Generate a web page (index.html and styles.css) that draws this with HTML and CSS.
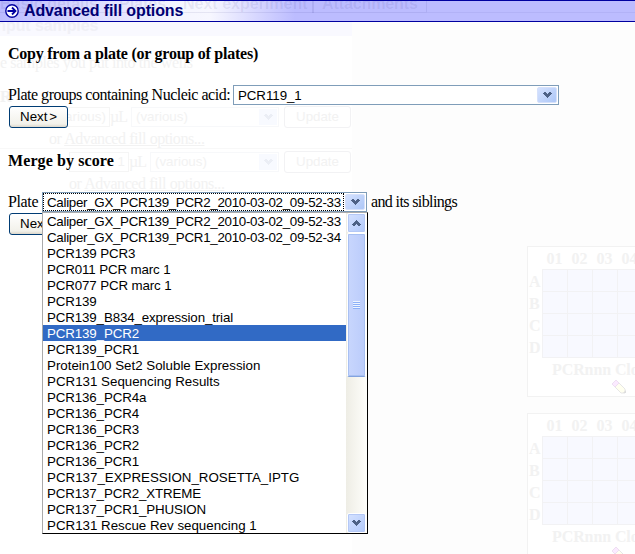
FILE: index.html
```html
<!DOCTYPE html>
<html lang="en">
<head>
<meta charset="utf-8">
<title>Advanced fill options</title>
<link rel="stylesheet" href="styles.css">
</head>
<body>
<svg class="defs" width="0" height="0">
  <symbol id="chev" viewBox="0 0 9 6" shape-rendering="crispEdges"><path fill="#4d6185" d="M1 0h2v1H1zM6 0h2v1H6zM0 1h4v1H0zM5 1h4v1H5zM1 2h7v1H1zM2 3h5v1H2zM3 4h3v1H3zM4 5h1v1H4z"/></symbol>
  <symbol id="pencil" viewBox="0 0 16 16"><path fill="#fffff0" stroke="#e6e6e6" d="M1 5L5 1l9 9v4h-4z"/><path fill="#fbeaff" stroke="#eedff2" d="M1 5L5 1l3 3-4 4z"/><path fill="#ddd" d="M12 14h3v-3z"/></symbol>
</svg>
<div class="page">
  <div class="left">
    <div class="band"><span>Input samples</span></div>
    <p class="wells">e samples you put into the wells</p>
    <div class="acid">R</div>
    <div class="fields first"><span class="box">(various)</span><span class="unit">µL</span><span class="drop">(various)<i><svg width="9" height="6"><use href="#chev"/></svg></i></span><span class="update">Update</span></div>
    <p class="or">or <u>Advanced fill options...</u></p>
    <div class="fields second"><span class="box">1</span><span class="unit">µL</span><span class="drop">(various)<i><svg width="9" height="6"><use href="#chev"/></svg></i></span><span class="update">Update</span></div>
    <p class="or more">or <u>Advanced fill options...</u></p>
  </div>
  <div class="plates">
    <div class="plate">
      <div class="cols"><b>01</b><b>02</b><b>03</b><b>04</b></div>
      <div class="body"><div class="letters"><b>A</b><b>B</b><b>C</b><b>D</b></div><div class="wellgrid"></div></div>
      <div class="name">PCRnnn Clo</div>
      <svg class="pen" width="16" height="16"><use href="#pencil"/></svg>
    </div>
    <div class="plate">
      <div class="cols"><b>01</b><b>02</b><b>03</b><b>04</b></div>
      <div class="body"><div class="letters"><b>A</b><b>B</b><b>C</b><b>D</b></div><div class="wellgrid"></div></div>
      <div class="name">PCRnnn Clo</div>
      <svg class="pen" width="16" height="16"><use href="#pencil"/></svg>
    </div>
  </div>
</div>
<div class="dialog">
  <div class="title">
    <div class="tabs"><span class="t1">Basic details</span><span class="t2">Plates</span><span class="t3">Next experiment</span><span class="t4">Attachments</span></div>
    <svg class="go" width="14" height="14" viewBox="0 0 14 14"><circle cx="7" cy="7" r="6.2" fill="#fff" stroke="#0000a0" stroke-width="1.4"/><path d="M2.5 7h8M7 3.5L10.5 7 7 10.5" fill="none" stroke="#0000a0" stroke-width="1.8"/></svg>
    <h1>Advanced fill options</h1>
  </div>
  <h2 class="copy">Copy from a plate (or group of plates)</h2>
  <div class="row"><span class="l1">Plate groups containing Nucleic acid:</span><div class="select wide"><span>PCR119_1</span><i><svg width="9" height="6"><use href="#chev"/></svg></i></div></div>
  <button class="next">Next &gt;</button>
  <h2 class="merge">Merge by score</h2>
  <div class="row"><span class="l2">Plate</span>
    <div class="select open"><span>Caliper_GX_PCR139_PCR2_2010-03-02_09-52-33</span><i><svg width="9" height="6"><use href="#chev"/></svg></i>
      <div class="menu">
        <ul>
          <li class="long">Caliper_GX_PCR139_PCR2_2010-03-02_09-52-33</li>
          <li class="long">Caliper_GX_PCR139_PCR1_2010-03-02_09-52-34</li>
          <li>PCR139 PCR3</li>
          <li>PCR011 PCR marc 1</li>
          <li>PCR077 PCR marc 1</li>
          <li>PCR139</li>
          <li>PCR139_B834_expression_trial</li>
          <li class="on">PCR139_PCR2</li>
          <li>PCR139_PCR1</li>
          <li class="caps">Protein100 Set2 Soluble Expression</li>
          <li class="caps">PCR131 Sequencing Results</li>
          <li>PCR136_PCR4a</li>
          <li>PCR136_PCR4</li>
          <li>PCR136_PCR3</li>
          <li>PCR136_PCR2</li>
          <li>PCR136_PCR1</li>
          <li class="caps">PCR137_EXPRESSION_ROSETTA_IPTG</li>
          <li>PCR137_PCR2_XTREME</li>
          <li>PCR137_PCR1_PHUSION</li>
          <li class="caps">PCR131 Rescue Rev sequencing 1</li>
        </ul>
        <div class="scroll">
          <div class="sb up"><svg width="9" height="6"><use href="#chev"/></svg></div>
          <div class="thumb"><div class="grip"></div></div>
          <div class="sb down"><svg width="9" height="6"><use href="#chev"/></svg></div>
        </div>
      </div>
    </div><span class="l3">and its siblings</span></div>
  <button class="next">Next &gt;</button>
</div>
</body>
</html>
```
FILE: styles.css
```css
* { box-sizing: border-box; }
body { margin: 0; width: 635px; height: 554px; overflow: hidden; position: relative; background: #fdfdfd; font: 16px/20px "Liberation Serif", serif; color: #000; }
h1, h2, p, ul { margin: 0; padding: 0; }
.defs { position: absolute; }
svg { display: block; flex: none; }

/* page under the dialog */
.page { position: absolute; inset: 0; overflow: hidden; display: flex; justify-content: space-between; color: #f2f2f2; }
.left { width: 352px; background: #fff; padding-top: 22px; overflow: hidden; white-space: nowrap; }
.band { height: 14px; background: #f9f9ff; color: #f0f0f6; font: bold 16px/8px "Liberation Sans", sans-serif; letter-spacing: -.1px; }
.band span { display: block; margin-left: -8px; }
.wells { margin-top: 17px; height: 20px; letter-spacing: -.4px; }
.acid { margin-top: 14px; height: 20px; font-weight: bold; }
.fields { display: flex; height: 20px; font: 13.33px/18px "Liberation Sans", sans-serif; }
.first { padding-left: 50px; }
.second { padding-left: 69px; border-top: 1px solid #f8f8f8; height: 24px; padding-top: 3px; }
.box { flex: none; width: 60px; height: 20px; border: 1px solid #f5f5f5; padding-left: 3px; }
.second .box { text-align: right; padding-right: 3px; }
.unit { flex: none; width: 21px; letter-spacing: -1px; font: 16px/20px "Liberation Serif", serif; }
.drop { flex: 1; height: 20px; border: 1px solid #f7f8fa; display: flex; justify-content: space-between; padding-left: 4px; }
.drop i { width: 18px; height: 16px; margin: 1px; background: #f8faff; display: flex; align-items: center; justify-content: center; }
.drop svg { opacity: .07; }
.update { width: 67px; height: 22px; margin: -1px 1px 0 5px; border: 1px solid #f2f2f4; border-radius: 3px; text-align: center; line-height: 20px; }
.or { margin: 2px 0 -1px 49px; letter-spacing: -.43px; }
.or.more { margin: 2px 0 0 69px; }
.plates { width: 108px; padding-top: 246px; }
.plate { height: 151px; width: 150px; margin-bottom: 16px; border: 1px solid #f2f2f2; background: #fff; font-weight: bold; }
.cols { display: flex; padding-left: 14px; height: 22px; line-height: 24px; }
.cols b { width: 25px; text-align: center; }
.body { display: flex; }
.letters { width: 14px; padding-left: 1px; }
.letters b { display: block; height: 22px; line-height: 26px; }
.wellgrid { width: 136px; height: 89px; background: repeating-linear-gradient(90deg, #f2f2f4 0 1px, transparent 1px 25px), repeating-linear-gradient(#f2f2f4 0 1px, #f8f9ff 1px 22px); }
.name { margin-left: 24px; line-height: 24px; height: 21px; white-space: nowrap; letter-spacing: -.1px; }
.pen { margin-left: 83px; }

/* dialog */
.dialog { position: absolute; inset: 0; }
.title { position: relative; height: 22px; border: solid #0000a0; border-width: 1px 0; background: linear-gradient(90deg, #b9b9ff 0, #dcdcff 90px, #f5f5ff 175px, #f7f7ff 210px, #bcbcff 295px); display: flex; align-items: center; padding-left: 5px; overflow: hidden; }
.tabs { position: absolute; left: 0; top: 0; width: 427px; height: 12px; border: solid rgba(0,0,90,.07); border-width: 0 1px 1px 0; display: flex; font: bold 16px/6px "Liberation Sans", sans-serif; color: rgba(0,0,90,.08); white-space: nowrap; }
.tabs::after { content: ""; position: absolute; left: 427px; top: 11px; width: 208px; height: 1px; background: rgba(0,0,90,.05); }
.t1 { width: 119px; }
.t2 { width: 64px; }
.t3 { width: 131px; border-right: 2px solid rgba(0,0,90,.08); height: 12px; letter-spacing: 0; }
.t4 { padding-left: 8px; letter-spacing: -.1px; }
.go { position: relative; }
h1 { position: relative; margin-left: 5px; font: bold 16px/20px "Liberation Sans", sans-serif; letter-spacing: -.12px; color: #000073; white-space: nowrap; }
h2 { font-size: 16px; line-height: 20px; padding-left: 8px; height: 20px; white-space: nowrap; }
.copy { margin-top: 22px; letter-spacing: -.24px; }
.merge { margin-top: 23px; letter-spacing: .1px; }
.row { display: flex; height: 20px; padding-left: 8px; margin-top: 21px; white-space: nowrap; letter-spacing: -.48px; }
.l1 { flex: none; width: 225px; }
.l2 { flex: none; width: 34px; letter-spacing: -.36px; }
.l3 { margin-left: 4px; letter-spacing: -.62px; }
.select { position: relative; flex: none; height: 20px; border: 1px solid #7f9db9; background: #fff; display: flex; font: 13.33px/19px "Liberation Sans", sans-serif; }
.select > span { flex: 1; min-width: 0; padding-left: 4px; letter-spacing: -.07px; }
.wide { width: 326px; }
.open { width: 325px; }
.open > span { border: 1px dotted #000; padding-left: 3px; line-height: 18px; letter-spacing: -.29px; }
.select > i { flex: none; width: 20px; margin: 1px; border: 1px solid #d6e1fb; border-radius: 2px; background: linear-gradient(135deg, #d5e2ff, #adc7f7); display: flex; align-items: center; justify-content: center; }
.next { display: block; margin: 1px 0 0 9px; width: 59px; height: 22px; border: 1px solid #003c74; border-radius: 3px; padding: 0; background: linear-gradient(#fff, #f2f1ea 85%, #dcd7cb); font: 13.33px/20px "Liberation Sans", sans-serif; color: #000; word-spacing: -2px; }
.menu { position: absolute; z-index: 2; left: -1px; top: 19px; width: 326px; height: 322px; border: 1px solid #000; border-left-color: #aaa; border-top-color: #aaa; background: #fff; display: flex; justify-content: space-between; }
.menu ul { list-style: none; width: 303px; font: 13.33px/17px "Liberation Sans", sans-serif; }
.menu li { height: 16px; padding-left: 4px; letter-spacing: -.13px; }
.menu .long { letter-spacing: -.29px; }
.menu .caps { letter-spacing: 0; }
.on { background: #316ac5; color: #fff; }
.scroll { width: 21px; padding: 0 1px 0 1px; background: linear-gradient(90deg, #eeede5, #fefefb); display: flex; flex-direction: column; }
.sb { height: 20px; border: 1px solid #fff; border-radius: 2px; background: linear-gradient(135deg, #d5e2ff, #b2c9fb); box-shadow: inset 0 0 0 1px #b4c8f6; display: flex; align-items: center; justify-content: center; flex: none; }
.up svg { transform: scaleY(-1); }
.thumb { height: 144px; border: 1px solid #fff; outline: 1px solid #a8c0f2; outline-offset: -2px; border-radius: 2px; background: linear-gradient(90deg, #c8d6fd, #bbccfb); border-bottom: 1px solid #83a3df; display: flex; align-items: center; justify-content: center; }
.grip { width: 7px; height: 8px; background: repeating-linear-gradient(#eef4fe 0 1px, #8cb0f8 1px 2px); }
.down { margin-top: auto; }
```
